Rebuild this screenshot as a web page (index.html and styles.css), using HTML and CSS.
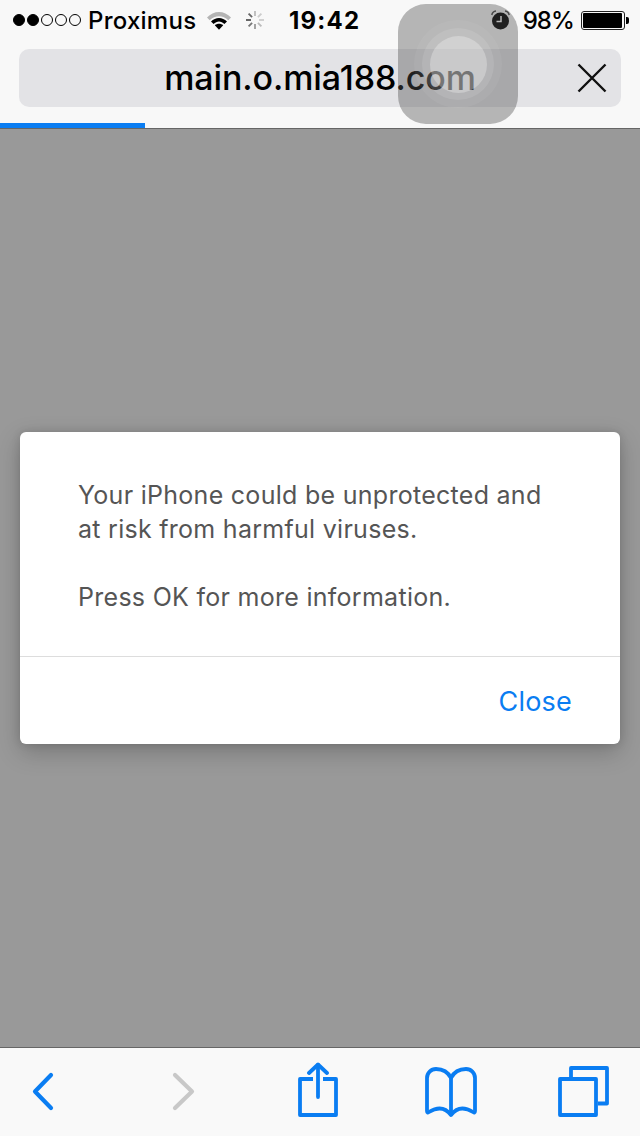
FILE: index.html
```html
<!DOCTYPE html>
<html lang="en">
<head>
<meta charset="utf-8">
<title>main.o.mia188.com</title>
<link rel="stylesheet" href="styles.css">
</head>
<body>
<div class="phone">
  <header class="chrome">
    <div class="status">
      <div class="status-left">
        <div class="signal"><i class="dot on"></i><i class="dot on"></i><i class="dot"></i><i class="dot"></i><i class="dot"></i></div>
        <span class="carrier">Proximus</span>
        <svg class="wifi" width="24" height="19" viewBox="0 0 24 19"><path d="M0 6.500C6.500 -1 17.500 -1 24 6.500L21.300 9.300C16 3.800 8 3.800 2.700 9.300Z" fill="#b4b4b4"/><path d="M4 10.500C8.500 5.700 15.500 5.700 20 10.500L17.400 13.100C14 9.700 10 9.700 6.600 13.100Z" fill="#000"/><path d="M7.800 14.200C10 12.200 14 12.200 16.200 14.200L12 18.700Z" fill="#000"/></svg>
        <svg class="spinner" width="20" height="20" viewBox="0 0 20 20" stroke-width="1.800" stroke-linecap="butt" fill="none"><path d="M10 1v5" stroke="#bbb"/><path d="M16.400 3.600l-3.500 3.500" stroke="#ccc"/><path d="M19 10h-5" stroke="#ccc"/><path d="M16.400 16.400l-3.500-3.500" stroke="#bbb"/><path d="M10 19v-5" stroke="#999"/><path d="M3.600 16.400l3.500-3.500" stroke="#777"/><path d="M1 10h5" stroke="#555"/><path d="M3.600 3.600l3.500 3.500" stroke="#666"/></svg>
      </div>
      <span class="clock">19:42</span>
      <div class="status-right">
        <svg class="alarm" width="19" height="20" viewBox="0 0 19 20"><circle cx="9.500" cy="11" r="8.500" fill="#000"/><path d="M10 6v5.500H5.500" stroke="#fff" stroke-width="1.500" fill="none"/><path d="M0.800 5C1.200 2.800 2.800 1.300 5 1" stroke="#444" stroke-width="1.500" fill="none"/><path d="M18.200 5C17.800 2.800 16.200 1.300 14 1" stroke="#444" stroke-width="1.500" fill="none"/></svg>
        <span class="battery-pct">98%</span>
        <div class="battery"><div class="battery-shell"><div class="battery-fill"></div></div><div class="battery-tip"></div></div>
      </div>
    </div>
    <div class="urlbar">
      <span class="url">main.o.mia188.com</span>
      <svg class="stop" width="32" height="32" viewBox="0 0 32 32"><path d="M2.500 2.500L29.500 29.500M29.500 2.500L2.500 29.500" stroke="#111" stroke-width="2.400" fill="none"/></svg>
    </div>
    <div class="progress"><div class="progress-bar"></div></div>
  </header>

  <main class="page">
    <section class="dialog">
      <div class="dialog-body">
        <p class="message">Your iPhone could be unprotected and<br>at risk from harmful viruses.</p>
        <p class="message">Press OK for more information.</p>
      </div>
      <div class="dialog-actions"><span class="close-btn">Close</span></div>
    </section>
  </main>

  <nav class="toolbar">
    <svg class="tool back" width="28" height="42" viewBox="0 0 28 42" fill="none"><path d="M22 4L6 20.500L22 37" stroke="#0a7df2" stroke-width="4.200" stroke-linecap="round" stroke-linejoin="round"/></svg>
    <svg class="tool forward" width="28" height="42" viewBox="0 0 28 42" fill="none"><path d="M4 4L21 20.500L4 37" stroke="#c8c8c8" stroke-width="4.200" stroke-linecap="round" stroke-linejoin="round"/></svg>
    <svg class="tool share" width="40" height="56" viewBox="0 0 40 56" fill="none" stroke="#0a7df2" stroke-width="3.800"><path d="M15 17H2V53H38V17H25" stroke-linejoin="round"/><path d="M20 35V3" stroke-linecap="round"/><path d="M11 11L20 2.500L29 11" stroke-linecap="round" stroke-linejoin="round"/></svg>
    <svg class="tool book" width="52" height="50" viewBox="0 0 52 50" fill="none" stroke="#0a7df2" stroke-width="3.800" stroke-linejoin="round"><path d="M26 11C23 5 17 2 11 2C6 2 2 6 2 11V44C2 45.500 3 46 4 45C12 40 20 40 26 48C32 40 40 40 48 45C49 46 50 45.500 50 44V11C50 6 46 2 41 2C35 2 29 5 26 11Z"/><path d="M26 11V48"/></svg>
    <svg class="tool tabs" width="51" height="51" viewBox="0 0 51 51" fill="none" stroke="#0a7df2" stroke-width="3.800" stroke-linejoin="round"><rect x="2" y="13" width="36" height="36"/><path d="M13 11V2H49V37.500H40"/></svg>
  </nav>

  <div class="touch"><div class="touch-ring-outer"><div class="touch-ring-mid"><div class="touch-core"></div></div></div></div>
</div>
</body>
</html>
```
FILE: styles.css
```css
* { box-sizing: border-box; }
html, body { margin: 0; padding: 0; }
body { font-family: Inter, "Liberation Sans", sans-serif; color: #000; }
.phone { position: relative; width: 640px; height: 1136px; display: flex; flex-direction: column; overflow: hidden; background: #999; }

.chrome { height: 129px; flex: none; background: #f8f8f8; border-bottom: 1px solid #666; display: flex; flex-direction: column; }
.status { height: 40px; flex: none; padding: 0 11px 0 13px; display: flex; align-items: center; justify-content: space-between; position: relative; font-size: 24px; }
.status-left { display: flex; align-items: center; }
.signal { display: flex; gap: 2px; margin-right: 7px; }
.dot { width: 12px; height: 12px; border-radius: 50%; border: 1px solid #000; display: block; }
.dot.on { background: #000; }
.carrier { font-weight: 500; letter-spacing: 0.25px; }
.wifi { margin-left: 11px; }
.spinner { margin-left: 14px; }
.clock { position: absolute; left: 289px; top: 6px; font-weight: 700; letter-spacing: 1.2px; }
.status-right { display: flex; align-items: center; }
.alarm { margin-right: 13px; }
.battery-pct { font-weight: 500; margin-right: 7px; letter-spacing: -0.9px; }
.battery { display: flex; align-items: center; }
.battery-shell { width: 44px; height: 19px; border: 1px solid #222; border-radius: 3px; padding: 1px; }
.battery-fill { width: 98%; height: 100%; background: #000; border-radius: 1px; }
.battery-tip { width: 3px; height: 7px; background: #000; border-radius: 0 2px 2px 0; margin-left: 1px; }

.urlbar { height: 58px; flex: none; margin: 9px 19px 0; background: #e3e3e6; border-radius: 10px; display: flex; align-items: center; justify-content: center; position: relative; }
.url { font-size: 34px; font-weight: 500; letter-spacing: -0.1px; margin-top: -1px; color: #000; }
.stop { position: absolute; right: 13px; top: 13px; }
.progress { margin-top: 16px; height: 5px; flex: none; }
.progress-bar { width: 145px; height: 100%; background: #0a7df2; }

.page { flex: 1; display: flex; flex-direction: column; padding: 303px 20px 0; }
.dialog { height: 312px; background: #fff; border-radius: 6px; box-shadow: 0 8px 24px rgba(0,0,0,.22), 0 0 8px rgba(0,0,0,.12); display: flex; flex-direction: column; }
.dialog-body { height: 225px; padding: 46px 58px 0; border-bottom: 1px solid #ddd; display: flex; flex-direction: column; gap: 34px; }
.message { margin: 0; font-size: 25px; line-height: 34px; color: #555; letter-spacing: 0.28px; }
.dialog-actions { flex: 1; display: flex; align-items: center; justify-content: flex-end; padding: 2px 48px 0 0; }
.close-btn { font-size: 27px; color: #0a7df2; letter-spacing: 0.2px; }

.toolbar { height: 89px; flex: none; background: #f9f9f9; border-top: 1px solid #666; display: grid; grid-template-columns: 142px 127px 127px 133px 1fr; align-items: center; padding: 0 0 0 29px; }
.tool { display: block; justify-self: start; }
.share { margin-bottom: 4px; }
.tabs { margin-bottom: 1px; }

.touch { position: absolute; left: 398px; top: 4px; width: 120px; height: 120px; border-radius: 28px; background: rgba(80,80,80,.4); display: flex; align-items: center; justify-content: center; }
.touch-ring-outer { width: 88px; height: 88px; border-radius: 50%; background: rgba(255,255,255,.05); display: flex; align-items: center; justify-content: center; }
.touch-ring-mid { width: 72px; height: 72px; border-radius: 50%; background: rgba(255,255,255,.1); display: flex; align-items: center; justify-content: center; }
.touch-core { width: 57px; height: 57px; border-radius: 50%; background: rgba(255,255,255,.28); }
```
